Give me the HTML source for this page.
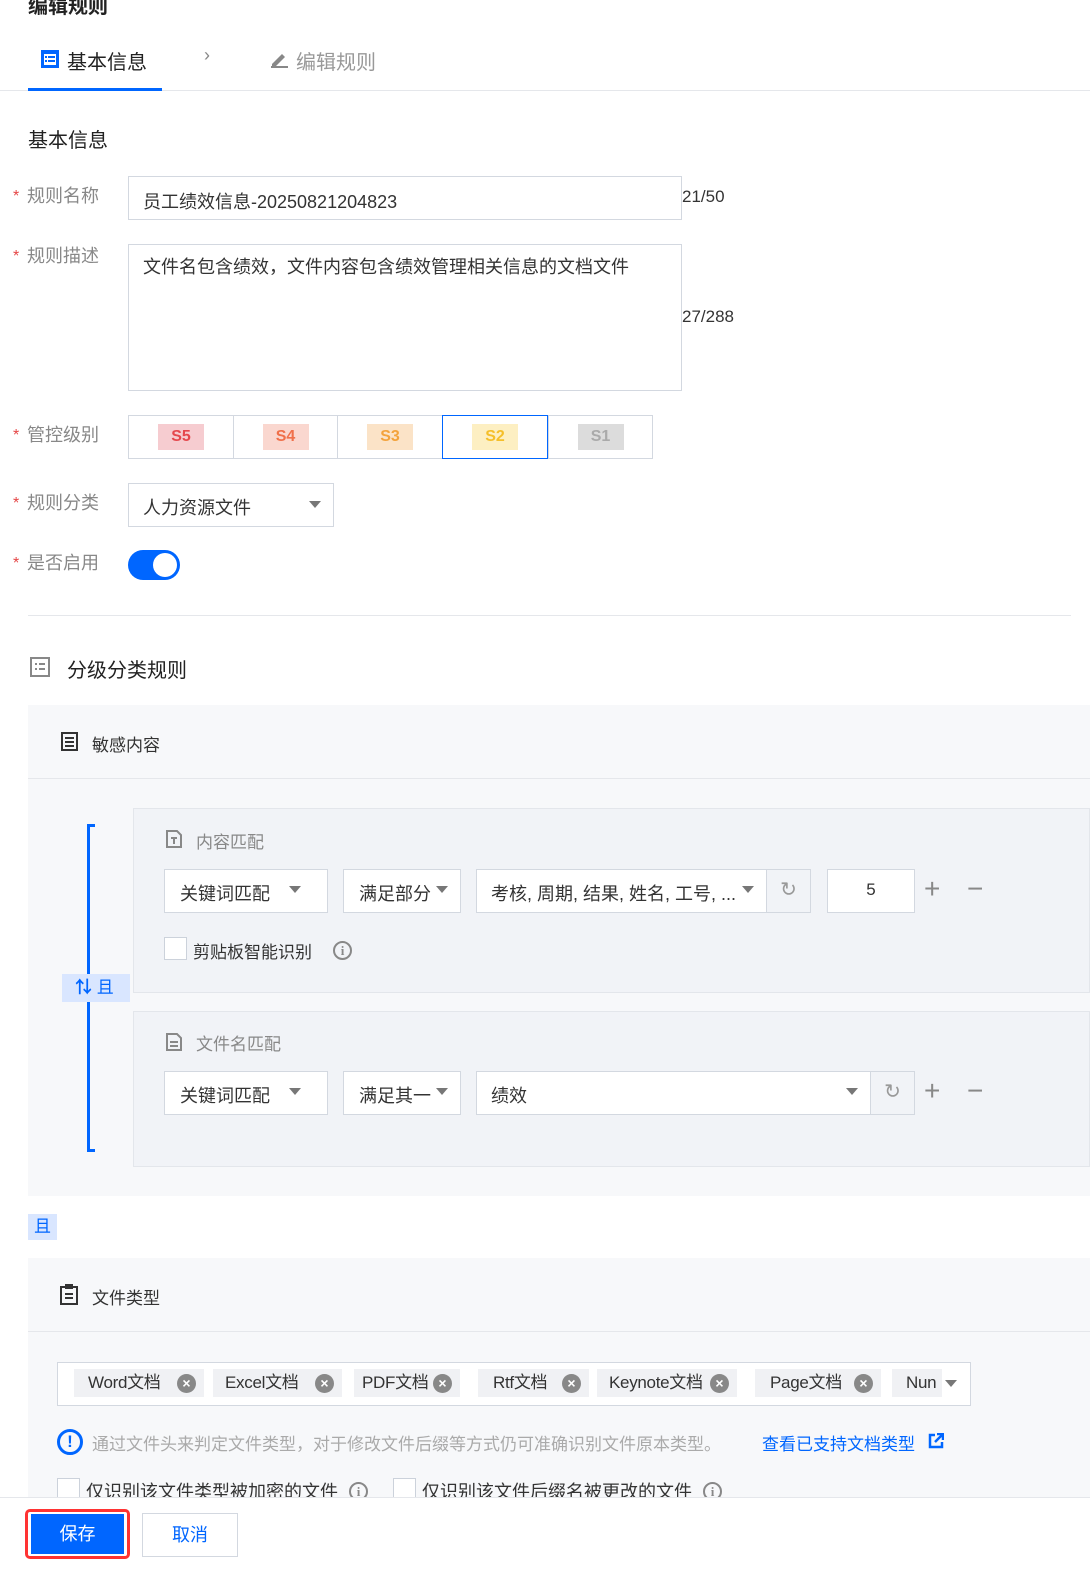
<!DOCTYPE html>
<html><head><meta charset="utf-8"><style>
*{box-sizing:border-box;margin:0;padding:0}
body{width:1090px;height:1596px;overflow:hidden;background:#fff;font-family:"Liberation Sans","Noto Sans CJK SC",sans-serif;color:#333;position:relative}
.a{position:absolute}
.lab{position:absolute;left:27px;font-size:18px;color:#888;line-height:20px}
.lab:before{content:"*";color:#e54545;position:absolute;left:-14px;top:1px;font-size:16px}
.box{position:absolute;border:1px solid #d3d8e0;background:#fff;font-size:18px;color:#333}
.tri{position:absolute;width:0;height:0;border-left:6px solid transparent;border-right:6px solid transparent;border-top:7px solid #777}
.seg{position:absolute;top:415px;height:44px;border:1px solid #d3d8e0;background:#fff}
.seg span{position:absolute;left:50%;top:8px;width:46px;height:26px;margin-left:-23px;font:bold 16px/26px "Liberation Sans",sans-serif;text-align:center}
.tag{position:absolute;top:1369px;height:28px;background:#f0f1f4;font-size:17px;line-height:28px;color:#333;padding-left:14px;white-space:nowrap;letter-spacing:-0.3px}
.x{position:absolute;right:8px;top:5px;width:19px;height:19px;border-radius:50%;background:#888;color:#fff;font:bold 14px/19px "Liberation Sans",sans-serif;text-align:center;letter-spacing:0}
.cb{position:absolute;width:23px;height:23px;border:1px solid #ccd2db;background:#fff}
.info{position:absolute;width:19px;height:19px;border:2px solid #888;border-radius:50%;color:#888;font:bold 13px/15px "Liberation Serif",serif;text-align:center}
</style></head><body>
<div class="a" style="left:28px;top:-10px;font-size:20px;font-weight:bold;color:#222">编辑规则</div>
<svg class="a" style="left:41px;top:50px" width="18" height="18"><rect x="0" y="0" width="18" height="18" fill="#0066ff"/><rect x="3" y="4" width="12" height="11" fill="#fff"/><rect x="4" y="6" width="2" height="2" fill="#0066ff"/><rect x="7" y="6" width="7" height="2" fill="#0066ff"/><rect x="4" y="10" width="2" height="2" fill="#0066ff"/><rect x="7" y="10" width="7" height="2" fill="#0066ff"/></svg>
<div class="a" style="left:67px;top:46px;font-size:20px;color:#222">基本信息</div>
<div class="a" style="left:204px;top:45px;font-size:18px;color:#888">›</div>
<svg class="a" style="left:270px;top:50px" width="18" height="18"><path d="M2 14 L12 4 L15 7 L5 17 L2 17 Z" fill="#888"/><rect x="1" y="16" width="17" height="2" fill="#888"/></svg>
<div class="a" style="left:296px;top:46px;font-size:20px;color:#999">编辑规则</div>
<div class="a" style="left:0;top:90px;width:1090px;height:1px;background:#e5e7eb"></div>
<div class="a" style="left:28px;top:88px;width:134px;height:3px;background:#0066ff"></div>
<div class="a" style="left:28px;top:124px;font-size:20px;color:#222">基本信息</div>

<div class="lab" style="top:186px">规则名称</div>
<div class="box" style="left:128px;top:176px;width:554px;height:44px;padding:11px 14px">员工绩效信息-20250821204823</div>
<div class="a" style="left:682px;top:187px;font-size:17px">21/50</div>
<div class="lab" style="top:246px">规则描述</div>
<div class="box" style="left:128px;top:244px;width:554px;height:147px;padding:8px 14px">文件名包含绩效，文件内容包含绩效管理相关信息的文档文件</div>
<div class="a" style="left:682px;top:307px;font-size:17px">27/288</div>
<div class="lab" style="top:425px">管控级别</div>
<div class="seg" style="left:128px;width:106px"><span style="background:#f6ccd0;color:#e5484d">S5</span></div>
<div class="seg" style="left:233px;width:105px"><span style="background:#fad7cf;color:#f0704a">S4</span></div>
<div class="seg" style="left:337px;width:106px"><span style="background:#fbe3c7;color:#f3a33c">S3</span></div>
<div class="seg" style="left:548px;width:105px"><span style="background:#dcdcdc;color:#aaa">S1</span></div>
<div class="seg" style="left:442px;width:106px;border-color:#0066ff"><span style="background:#fdefc2;color:#f5bf2a">S2</span></div>
<div class="lab" style="top:493px">规则分类</div>
<div class="box" style="left:128px;top:483px;width:206px;height:44px;padding:10px 14px">人力资源文件</div>
<div class="tri" style="left:309px;top:501px"></div>
<div class="lab" style="top:553px">是否启用</div>
<div class="a" style="left:128px;top:550px;width:52px;height:30px;border-radius:15px;background:#0066ff"></div>
<div class="a" style="left:153px;top:553px;width:24px;height:24px;border-radius:50%;background:#fff"></div>
<div class="a" style="left:28px;top:615px;width:1043px;height:1px;background:#e5e7eb"></div>

<svg class="a" style="left:30px;top:657px" width="20" height="20"><rect x="1" y="1" width="18" height="18" fill="none" stroke="#888" stroke-width="2"/><rect x="5" y="6" width="2" height="2" fill="#888"/><rect x="9" y="6" width="6" height="2" fill="#888"/><rect x="5" y="11" width="2" height="2" fill="#888"/><rect x="9" y="11" width="6" height="2" fill="#888"/></svg>
<div class="a" style="left:67px;top:654px;font-size:20px;color:#222">分级分类规则</div>

<div class="a" style="left:28px;top:705px;width:1062px;height:491px;background:#f7f8fa"></div>
<div class="a" style="left:28px;top:778px;width:1062px;height:1px;background:#e5e7eb"></div>
<svg class="a" style="left:61px;top:732px" width="17" height="19"><rect x="1" y="1" width="15" height="17" fill="none" stroke="#333" stroke-width="2"/><rect x="4" y="5" width="9" height="2" fill="#333"/><rect x="4" y="9" width="9" height="2" fill="#333"/><rect x="4" y="13" width="9" height="2" fill="#333"/></svg>
<div class="a" style="left:92px;top:731px;font-size:17px;color:#333">敏感内容</div>

<div class="a" style="left:87px;top:824px;width:3px;height:328px;background:#0066ff"></div>
<div class="a" style="left:87px;top:824px;width:8px;height:3px;background:#0066ff"></div>
<div class="a" style="left:87px;top:1149px;width:8px;height:3px;background:#0066ff"></div>
<div class="a" style="left:62px;top:974px;width:68px;height:28px;background:#d9e6ff;color:#0066ff;font-size:17px;line-height:28px;padding-left:13px"><b>⇅</b> 且</div>

<div class="a" style="left:133px;top:808px;width:957px;height:185px;background:#f1f3f7;border:1px solid #e3e6eb"></div>
<svg class="a" style="left:166px;top:830px" width="16" height="18"><path d="M1 1H11L15 5V17H1Z" fill="none" stroke="#888" stroke-width="2"/><rect x="5" y="7" width="6" height="2" fill="#888"/><rect x="7" y="7" width="2" height="7" fill="#888"/></svg>
<div class="a" style="left:196px;top:828px;font-size:17px;color:#888">内容匹配</div>
<div class="box" style="left:164px;top:869px;width:164px;height:44px;padding:10px 15px">关键词匹配</div><div class="tri" style="left:289px;top:886px"></div>
<div class="box" style="left:343px;top:869px;width:118px;height:44px;padding:10px 15px">满足部分</div><div class="tri" style="left:436px;top:886px"></div>
<div class="box" style="left:476px;top:869px;width:291px;height:44px;padding:10px 14px">考核, 周期, 结果, 姓名, 工号, ...</div><div class="tri" style="left:742px;top:886px"></div>
<div class="box" style="left:766px;top:869px;width:45px;height:44px;background:#f1f3f7;color:#999;text-align:center;line-height:40px;font-size:20px">↻</div>
<div class="box" style="left:827px;top:869px;width:88px;height:44px;text-align:center;line-height:40px;font-size:17px">5</div>
<div class="a" style="left:924px;top:873px;font-size:28px;color:#888">+</div>
<div class="a" style="left:967px;top:873px;font-size:28px;color:#888">−</div>
<div class="cb" style="left:164px;top:937px"></div>
<div class="a" style="left:193px;top:938px;font-size:17px">剪贴板智能识别</div>
<div class="info" style="left:333px;top:941px">i</div>

<div class="a" style="left:133px;top:1011px;width:957px;height:156px;background:#f1f3f7;border:1px solid #e3e6eb"></div>
<svg class="a" style="left:166px;top:1033px" width="16" height="18"><path d="M1 1H11L15 5V17H1Z" fill="none" stroke="#888" stroke-width="2"/><rect x="4" y="8" width="8" height="2" fill="#888"/><rect x="4" y="12" width="8" height="2" fill="#888"/></svg>
<div class="a" style="left:196px;top:1030px;font-size:17px;color:#888">文件名匹配</div>
<div class="box" style="left:164px;top:1071px;width:164px;height:44px;padding:10px 15px">关键词匹配</div><div class="tri" style="left:289px;top:1088px"></div>
<div class="box" style="left:343px;top:1071px;width:118px;height:44px;padding:10px 15px">满足其一</div><div class="tri" style="left:436px;top:1088px"></div>
<div class="box" style="left:476px;top:1071px;width:395px;height:44px;padding:10px 14px">绩效</div><div class="tri" style="left:846px;top:1088px"></div>
<div class="box" style="left:870px;top:1071px;width:45px;height:44px;background:#f1f3f7;color:#999;text-align:center;line-height:40px;font-size:20px">↻</div>
<div class="a" style="left:924px;top:1075px;font-size:28px;color:#888">+</div>
<div class="a" style="left:967px;top:1075px;font-size:28px;color:#888">−</div>

<div class="a" style="left:28px;top:1214px;width:29px;height:26px;background:#d9e6ff;color:#0066ff;font-size:17px;line-height:26px;text-align:center">且</div>

<div class="a" style="left:28px;top:1258px;width:1062px;height:240px;background:#f7f8fa"></div>
<div class="a" style="left:28px;top:1331px;width:1062px;height:1px;background:#e5e7eb"></div>
<svg class="a" style="left:60px;top:1284px" width="18" height="21"><rect x="1" y="3" width="16" height="17" fill="none" stroke="#333" stroke-width="2"/><rect x="5" y="0" width="8" height="5" fill="#333"/><rect x="5" y="9" width="8" height="2" fill="#333"/><rect x="5" y="13" width="8" height="2" fill="#333"/></svg>
<div class="a" style="left:92px;top:1284px;font-size:17px;color:#333">文件类型</div>

<div class="box" style="left:57px;top:1362px;width:914px;height:44px"></div>
<div class="tag" style="left:74px;width:130px">Word文档<span class="x">×</span></div>
<div class="tag" style="left:213px;width:129px;padding-left:12px">Excel文档<span class="x">×</span></div>
<div class="tag" style="left:354px;width:106px;padding-left:8px">PDF文档<span class="x">×</span></div>
<div class="tag" style="left:478px;width:111px;padding-left:15px">Rtf文档<span class="x">×</span></div>
<div class="tag" style="left:597px;width:140px;padding-left:12px">Keynote文档<span class="x">×</span></div>
<div class="tag" style="left:755px;width:126px;padding-left:15px">Page文档<span class="x">×</span></div>
<div class="tag" style="left:892px;width:50px;padding-left:14px">Nun</div>
<div class="tri" style="left:945px;top:1380px"></div>

<div class="a" style="left:57px;top:1429px;width:26px;height:26px;border:3px solid #0066ff;border-radius:50%;color:#0066ff;font:bold 17px/20px 'Liberation Sans',sans-serif;text-align:center">!</div>
<div class="a" style="left:92px;top:1430px;font-size:17px;color:#aaa">通过文件头来判定文件类型，对于修改文件后缀等方式仍可准确识别文件原本类型。</div>
<div class="a" style="left:762px;top:1430px;font-size:17px;color:#0066ff">查看已支持文档类型</div>
<svg class="a" style="left:928px;top:1433px" width="16" height="16"><path d="M7 2H2V14H14V9" fill="none" stroke="#0066ff" stroke-width="2.5"/><path d="M9 1H15V7M15 1L7 9" fill="none" stroke="#0066ff" stroke-width="2.5"/></svg>
<div class="cb" style="left:57px;top:1478px"></div>
<div class="a" style="left:86px;top:1478px;font-size:18px">仅识别该文件类型被加密的文件</div>
<div class="info" style="left:349px;top:1482px">i</div>
<div class="cb" style="left:393px;top:1478px"></div>
<div class="a" style="left:422px;top:1478px;font-size:18px">仅识别该文件后缀名被更改的文件</div>
<div class="info" style="left:703px;top:1482px">i</div>

<div class="a" style="left:0;top:1497px;width:1090px;height:99px;background:#fff;border-top:1px solid #e5e7eb"></div>
<div class="a" style="left:25px;top:1509px;width:105px;height:50px;border:3px solid #f33;border-radius:5px"></div>
<div class="a" style="left:31px;top:1514px;width:93px;height:40px;background:#0066ff;color:#fff;font-size:18px;line-height:40px;text-align:center">保存</div>
<div class="a" style="left:142px;top:1513px;width:96px;height:44px;border:1px solid #d3d8e0;color:#0066ff;font-size:18px;line-height:42px;text-align:center">取消</div>
</body></html>
